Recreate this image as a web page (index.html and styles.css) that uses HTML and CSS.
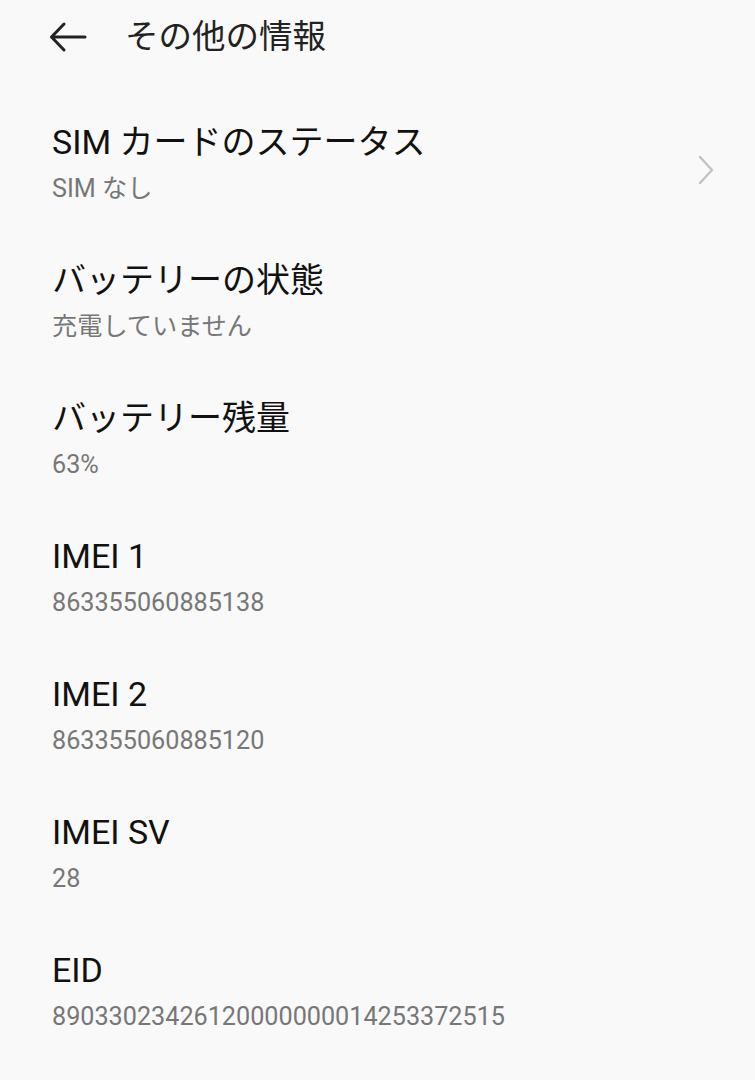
FILE: index.html
```html
<!DOCTYPE html>
<html lang="ja">
<head>
    <meta charset="UTF-8">
    <meta name="viewport" content="width=device-width, initial-scale=1.0">
    <title>その他の情報</title>
    <link rel="stylesheet" href="styles.css">
</head>
<body>
    <header class="topbar">
        <svg class="back" width="38" height="30" viewBox="0 0 38 30">
            <path d="M36 15H3M15 2L2.5 15L15 28" fill="none" stroke="#222" stroke-width="3" stroke-linecap="round" stroke-linejoin="round"/>
        </svg>
        <h1>その他の情報</h1>
    </header>

    <div class="list">
        <div class="item">
            <div class="text">
                <div class="title">SIM カードのステータス</div>
                <div class="sub">SIM なし</div>
            </div>
            <svg class="chevron" width="18" height="30" viewBox="0 0 18 30">
                <path d="M3 2L15 15L3 28" fill="none" stroke="#c2c2c2" stroke-width="2.4" stroke-linecap="round" stroke-linejoin="round"/>
            </svg>
        </div>
        <div class="item">
            <div class="text">
                <div class="title">バッテリーの状態</div>
                <div class="sub">充電していません</div>
            </div>
        </div>
        <div class="item">
            <div class="text">
                <div class="title">バッテリー残量</div>
                <div class="sub">63%</div>
            </div>
        </div>
        <div class="item">
            <div class="text">
                <div class="title">IMEI 1</div>
                <div class="sub">863355060885138</div>
            </div>
        </div>
        <div class="item">
            <div class="text">
                <div class="title">IMEI 2</div>
                <div class="sub">863355060885120</div>
            </div>
        </div>
        <div class="item">
            <div class="text">
                <div class="title">IMEI SV</div>
                <div class="sub">28</div>
            </div>
        </div>
        <div class="item">
            <div class="text">
                <div class="title">EID</div>
                <div class="sub">89033023426120000000014253372515</div>
            </div>
        </div>
    </div>
</body>
</html>
```

FILE: styles.css
```css
html, body {
    background-color: #f8f9f8;
}

body {
    margin: 0;
    font-family: Roboto, "Noto Sans CJK JP", sans-serif;
    color: #1a1a1a;
}

.topbar {
    display: flex;
    align-items: center;
    height: 74px;
    padding-left: 49px;
}

.back {
    display: block;
    margin-right: 38px;
}

.topbar h1 {
    margin: 0;
    font-size: 33.5px;
    font-weight: 400;
    line-height: 40px;
    color: #222;
}

.list {
    padding-top: 26px;
}

.item {
    display: flex;
    align-items: center;
    justify-content: space-between;
    height: 138px;
    box-sizing: border-box;
    padding: 22px 40px 32px 52px;
}

.title {
    font-size: 34px;
    line-height: 40px;
    color: #111;
}

.sub {
    margin-top: 10px;
    font-size: 25.2px;
    line-height: 34px;
    color: #777;
}

.chevron {
    display: block;
    margin-top: 12px;
}
```
